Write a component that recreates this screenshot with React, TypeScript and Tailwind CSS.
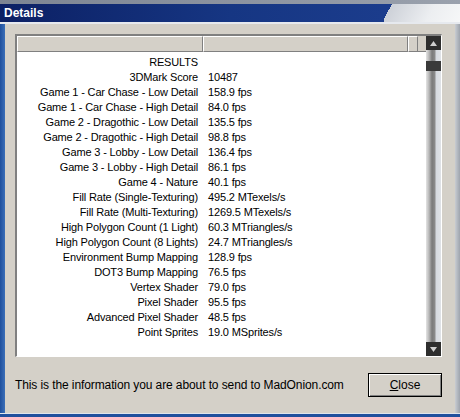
import React from 'react';

const rows: [string, string][] = [
  ['RESULTS', ''],
  ['3DMark Score', '10487'],
  ['Game 1 - Car Chase - Low Detail', '158.9 fps'],
  ['Game 1 - Car Chase - High Detail', '84.0 fps'],
  ['Game 2 - Dragothic - Low Detail', '135.5 fps'],
  ['Game 2 - Dragothic - High Detail', '98.8 fps'],
  ['Game 3 - Lobby - Low Detail', '136.4 fps'],
  ['Game 3 - Lobby - High Detail', '86.1 fps'],
  ['Game 4 - Nature', '40.1 fps'],
  ['Fill Rate (Single-Texturing)', '495.2 MTexels/s'],
  ['Fill Rate (Multi-Texturing)', '1269.5 MTexels/s'],
  ['High Polygon Count (1 Light)', '60.3 MTriangles/s'],
  ['High Polygon Count (8 Lights)', '24.7 MTriangles/s'],
  ['Environment Bump Mapping', '128.9 fps'],
  ['DOT3 Bump Mapping', '76.5 fps'],
  ['Vertex Shader', '79.0 fps'],
  ['Pixel Shader', '95.5 fps'],
  ['Advanced Pixel Shader', '48.5 fps'],
  ['Point Sprites', '19.0 MSprites/s'],
];

const ScrollBar: React.FC = () => (
  <div className="w-[15px] flex flex-col bg-[linear-gradient(to_right,#e4e4e4_0,#b8b8b8_3px,#7a7a7a_6px,#8c8c8c_9px,#d6dae0_10px,#dfe2e6_15px)]">
    <div className="h-[14px] bg-[#2e2e2e] flex items-center justify-center">
      <svg width="7" height="5" viewBox="0 0 7 5">
        <path d="M0 5 L3.5 0 L7 5 Z" fill="#d0d0d0" />
      </svg>
    </div>
    <div className="h-[11px]" />
    <div className="h-[10px] bg-[#3a3a3a]" />
    <div className="flex-1" />
    <div className="h-[14px] bg-[#2e2e2e] flex items-center justify-center">
      <svg width="7" height="5" viewBox="0 0 7 5">
        <path d="M0 0 L3.5 5 L7 0 Z" fill="#d0d0d0" />
      </svg>
    </div>
  </div>
);

const App: React.FC = () => {
  return (
    <div className="w-[460px] h-[417px] flex flex-col bg-[#d4d0c8] font-['Liberation_Sans',Arial,sans-serif] text-[12px] text-black overflow-hidden">
      {/* title bar */}
      <div className="h-[4px] bg-[linear-gradient(to_right,#7d8593,#9aa1ad)]" />
      <div className="h-[18px] flex">
        <div className="flex-1 bg-[linear-gradient(to_right,#0c2064,#163683_60%,#1b3c8c)] pl-[4px] flex items-center">
          <span className="text-white font-bold text-[12px] leading-none">Details</span>
        </div>
        <div className="w-[76px] bg-[linear-gradient(119deg,#1b3c8c_0,#1b3c8c_7px,#cdd1d8_7px,#eceef1_60%,#f6f7f8)]" />
      </div>
      <div className="h-[2px] bg-[#e6e9ee]" />

      <div className="flex-1 flex">
        <div className="w-[5px] bg-[linear-gradient(to_right,#1f4f9d,#3b6fb8)]" />
        <div className="flex-1 flex flex-col pl-[10px] pr-[13px] pt-[10px]">
          {/* list box */}
          <div className="h-[323px] border-t-2 border-l-2 border-[#808080] border-b border-r border-b-white border-r-white bg-white flex">
            <div className="flex-1 flex flex-col">
              <div className="h-[16px] flex bg-[#d4d0c8]">
                <div className="w-[186px] border-t border-l border-white border-r border-b border-r-[#808080] border-b-[#808080]" />
                <div className="w-[205px] border-t border-l border-white border-r border-b border-r-[#808080] border-b-[#808080]" />
                <div className="w-[10px] border-t border-l border-white border-r border-b border-r-[#808080] border-b-[#808080]" />
                <div className="flex-1 border-b border-b-[#808080]" />
              </div>
              <div className="pt-[3px] flex flex-col text-[11px] tracking-[-0.15px]">
                {rows.map(([label, value]) => (
                  <div key={label} className="h-[15px] flex items-center leading-none">
                    <div className="w-[181px] text-right whitespace-nowrap">{label}</div>
                    <div className="pl-[10px] whitespace-nowrap">{value}</div>
                  </div>
                ))}
              </div>
            </div>
            <ScrollBar />
          </div>

          {/* footer */}
          <div className="flex-1 flex items-center justify-between">
            <span className="tracking-[-0.1px]">This is the information you are about to send to MadOnion.com</span>
            <button className="w-[74px] h-[24px] border border-black bg-[#d4d0c8] flex items-center justify-center shadow-[inset_1px_1px_0_#ffffff,inset_-1px_-1px_0_#808080]">
              <span>
                <span className="underline">C</span>lose
              </span>
            </button>
          </div>
        </div>
        <div className="w-[5px] bg-[linear-gradient(to_right,#c8ccd2,#9ea4ad)]" />
      </div>
      <div className="h-[1px] bg-[#dfe4ec]" />
      <div className="h-[3px] bg-[#1f4f9d]" />
    </div>
  );
};

export default App;
